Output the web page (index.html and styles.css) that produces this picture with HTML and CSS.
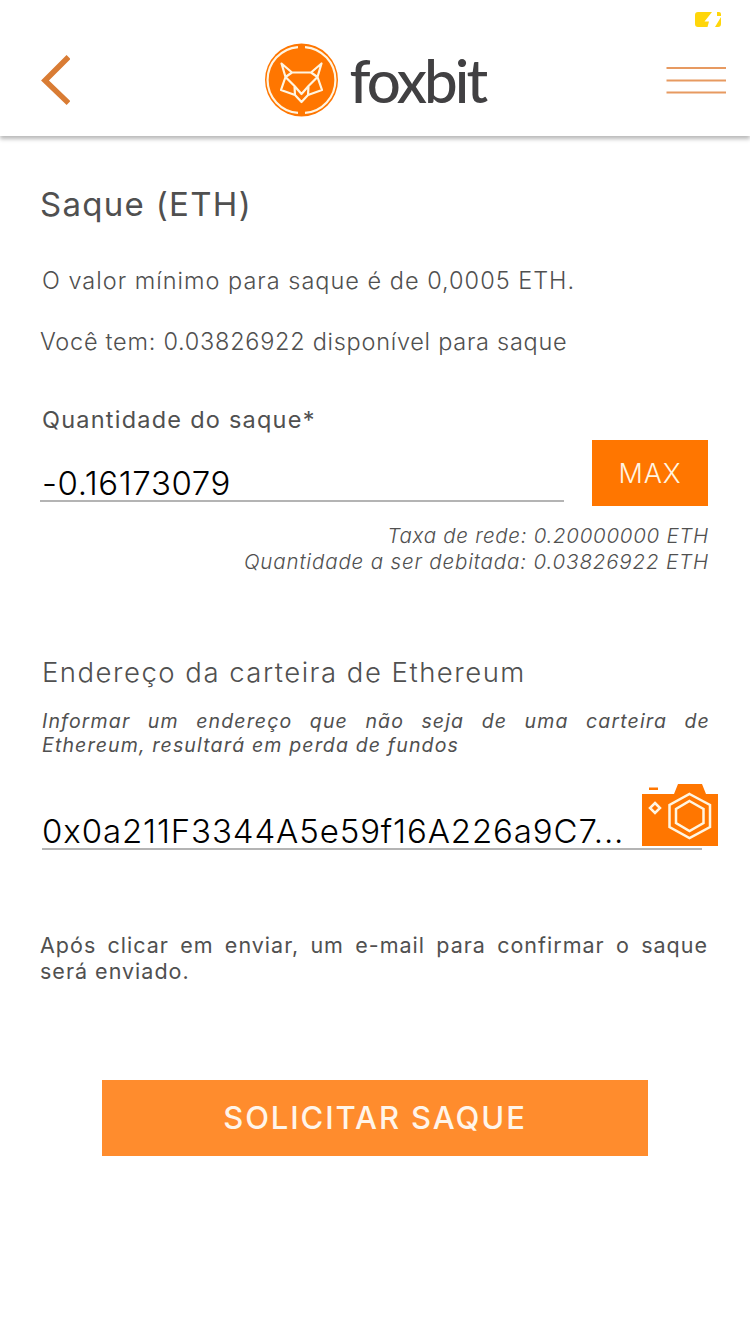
FILE: index.html
```html
<!DOCTYPE html>
<html lang="pt-BR">
  <head>
    <meta charset="utf-8" />
    <meta name="viewport" content="width=device-width, initial-scale=1" />
    <title>Foxbit - Saque</title>
    <link rel="stylesheet" href="styles.css">
  </head>
  <body>
    <header class="header">
      <svg class="header__back" width="30" height="50" viewBox="0 0 30 50">
        <path d="M28.500 2L5 25.500l23.500 22.500" fill="none" stroke="#d97c34" stroke-width="5.5" />
      </svg>
      <div class="logo">
        <svg width="74" height="74" viewBox="0 0 74 74" fill="none" stroke="#fff5e2" stroke-linejoin="round">
          <circle cx="36.500" cy="37" r="36.5" fill="#ff7600" stroke="none" />
          <path d="M33 4.100A33 33 0 0 0 33 69.900M40 4.100A33 33 0 0 1 40 69.900" stroke-width="2.200" />
          <path d="M16.500 20.500L27 29.500H46L56.500 20.500L52.500 34L57 47L43 52L36.500 59L30 52L16 47L20.500 34ZM27 29.500L20.500 34L29.500 43L36.500 51L43.500 43L52.500 34L46 29.500M29.500 43L30 52M43.500 43L43 52" stroke-width="2.200" />
        </svg>
        <span class="logo__name">foxbit</span>
      </div>
      <svg class="header__menu" width="60" height="28" viewBox="0 0 60 28">
        <path d="M0.500 2H60M0.500 14.500H60M0.500 26.500H60" stroke="#e79a61" stroke-width="2" />
      </svg>
      <svg class="header__battery" width="26" height="15" viewBox="0 0 26 15" fill="#ffd60a">
        <path d="M3 0H17L9.500 9.500H14L12.500 15H3Q0 15 0 12V3Q0 0 3 0ZM22 0H24Q26 0 26 2V4H22ZM26 5V12Q26 15 23 15H20Z" />
      </svg>
    </header>

    <main class="withdraw">
      <h1 class="withdraw__title">Saque (ETH)</h1>
      <p class="withdraw__minimum">O valor mínimo para saque é de 0,0005 ETH.</p>
      <p class="withdraw__balance">Você tem: 0.03826922 disponível para saque</p>

      <div class="amount">
        <div class="amount__field">
          <label class="amount__label">Quantidade do saque*</label>
          <div class="amount__value">-0.16173079</div>
        </div>
        <button class="amount__max">MAX</button>
      </div>
      <div class="fees">
        <div class="fees__network">Taxa de rede: 0.20000000 ETH</div>
        <div class="fees__total">Quantidade a ser debitada: 0.03826922 ETH</div>
      </div>

      <h2 class="wallet__title">Endereço da carteira de Ethereum</h2>
      <p class="wallet__warning">Informar um endereço que não seja de uma carteira de Ethereum, resultará em perda de fundos</p>
      <div class="wallet__field">
        <span class="wallet__address">0x0a211F3344A5e59f16A226a9C7...</span>
        <svg class="wallet__camera" width="76" height="63" viewBox="0 0 76 63">
          <path d="M0 11H32L36 1H60L64 11H76V63H0ZM7 4.500H16V7H7Z" fill="#ff7600" />
          <path d="M13 20L18 25L13 30L8 25ZM47.500 11L68 22V44L47.500 55L27.500 44V22ZM47.500 18L61.500 26V40L47.500 48L34 40V26Z" fill="none" stroke="#fff5e2" stroke-width="2.500" />
        </svg>
      </div>

      <p class="withdraw__notice">Após clicar em enviar, um e-mail para confirmar o saque será enviado.</p>
      <button class="withdraw__submit">SOLICITAR SAQUE</button>
    </main>
  </body>
</html>
```
FILE: styles.css
```css
* {
	box-sizing: border-box;
}

body {
	margin: 0;
	background: #fff;
	color: #505050;
	font-family: Inter, "Open Sans", sans-serif;
}

h1, h2, p {
	margin: 0;
	font-weight: 400;
}

button {
	display: block;
	border: 0;
	padding: 0;
	font-family: inherit;
}

.header {
	position: relative;
	display: flex;
	justify-content: space-between;
	height: 136px;
	padding: 43px 24px 0 40px;
	box-shadow: 0 3px 4px rgba(0, 0, 0, 0.28);
}
.header__back {
	margin-top: 12px;
}
.header__menu {
	margin-top: 23px;
}
.header__battery {
	position: absolute;
	top: 12px;
	right: 29px;
}

.logo {
	display: flex;
	width: 224px;
	height: 74px;
	margin-left: 17px;
}
.logo svg {
	flex: none;
}
.logo__name {
	margin-left: 11px;
	color: #414042;
	font-family: Lato, sans-serif;
	font-size: 60px;
	font-weight: 500;
	line-height: 75px;
	letter-spacing: -2.9px;
}

.withdraw {
	padding: 48px 40px 0;
}
.withdraw__title {
	font-size: 33px;
	line-height: 40px;
	letter-spacing: 1.3px;
}
.withdraw__minimum {
	margin: 42px 0 0 2px;
	font-size: 23.5px;
	font-weight: 300;
	line-height: 30px;
	letter-spacing: 1px;
}
.withdraw__balance {
	margin-top: 31px;
	font-size: 23.5px;
	font-weight: 300;
	line-height: 30px;
	letter-spacing: 0.73px;
}

.amount {
	display: flex;
	align-items: flex-end;
	justify-content: space-between;
	margin: 47px 2px 0 0;
}
.amount__field {
	width: 524px;
	margin-bottom: 4px;
}
.amount__label {
	display: block;
	padding-left: 2px;
	font-size: 23.5px;
	line-height: 32px;
	letter-spacing: 1.23px;
}
.amount__value {
	height: 66px;
	padding: 27px 0 0 2px;
	border-bottom: 2px solid #b4b4b4;
	color: #000;
	font-size: 33px;
	font-weight: 350;
	line-height: 40px;
	letter-spacing: 0.6px;
}
.amount__max {
	width: 116px;
	height: 66px;
	background: #ff7600;
	color: #fff5e2;
	font-size: 27px;
	font-weight: 300;
	letter-spacing: 0.8px;
}

.fees {
	margin: 17px 1px 0 0;
	font-size: 20.5px;
	font-style: italic;
	font-weight: 300;
	line-height: 26px;
	text-align: right;
}
.fees__network {
	letter-spacing: 0.72px;
}
.fees__total {
	letter-spacing: 0.85px;
}

.wallet__title {
	margin: 79px 0 0 2px;
	font-size: 27.5px;
	font-weight: 300;
	line-height: 36px;
	letter-spacing: 1.5px;
}
.wallet__warning {
	margin: 19px 0 0 2px;
	font-size: 19.5px;
	font-style: italic;
	line-height: 24px;
	letter-spacing: 1.15px;
	text-align: justify;
}
.wallet__field {
	position: relative;
	width: 660px;
	height: 67px;
	margin: 26px 0 0 2px;
	padding-top: 28px;
	border-bottom: 2px solid #b4b4b4;
	color: #000;
	font-size: 33px;
	font-weight: 350;
	line-height: 40px;
	letter-spacing: 0.88px;
	white-space: nowrap;
}
.wallet__camera {
	position: absolute;
	top: 0;
	right: -16px;
}

.withdraw__notice {
	margin: 82px 2px 0 0;
	font-size: 21.5px;
	line-height: 26px;
	letter-spacing: 1px;
	text-align: justify;
}
.withdraw__submit {
	width: 546px;
	height: 76px;
	margin: 96px auto 0 62px;
	background: #ff8c2d;
	color: #fff5ea;
	font-size: 31px;
	font-weight: 500;
	line-height: 74px;
	letter-spacing: 1.9px;
}
```
